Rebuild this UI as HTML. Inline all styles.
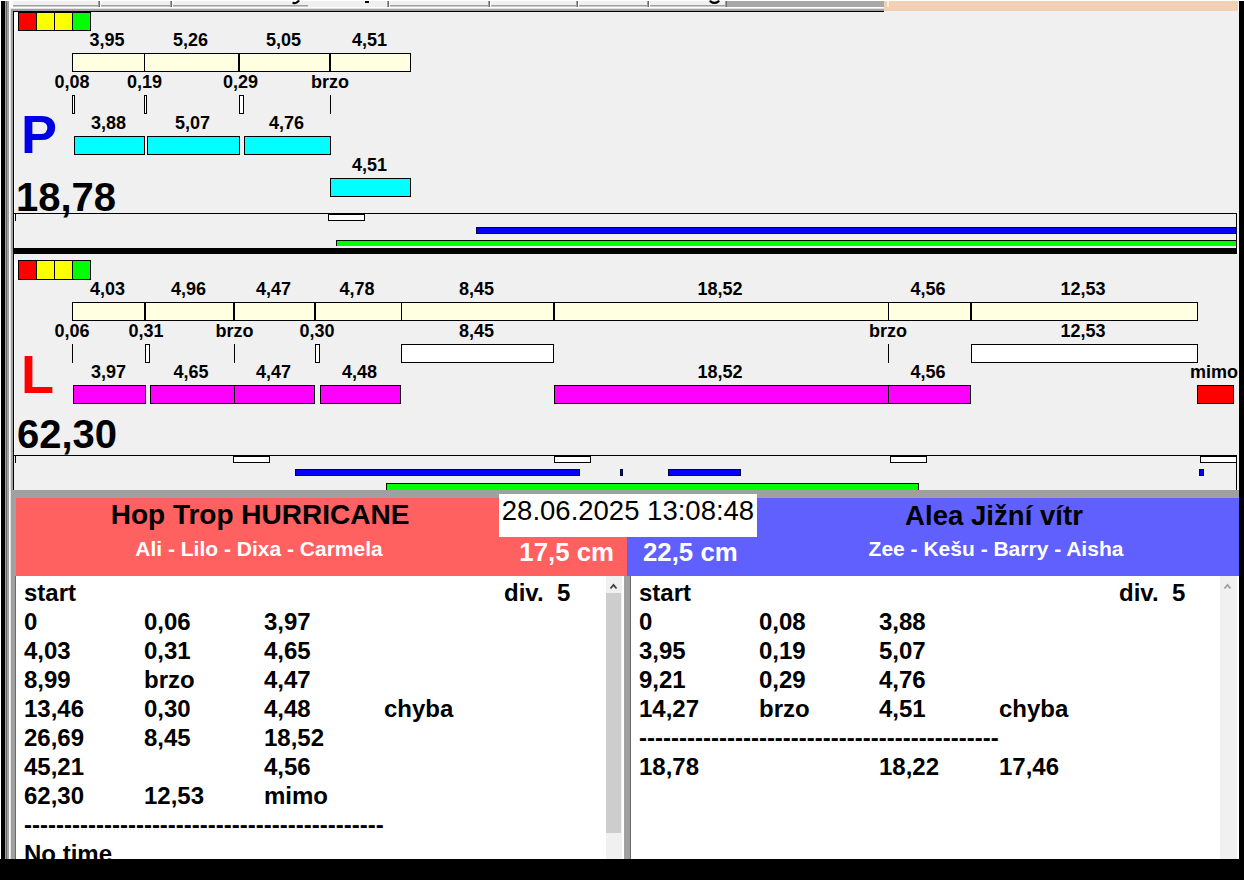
<!DOCTYPE html>
<html><head><meta charset="utf-8"><style>
html,body{margin:0;padding:0;width:1244px;height:880px;overflow:hidden;background:#fff}
div,svg{position:absolute}
.t{font-family:'Liberation Sans', sans-serif;line-height:1;white-space:nowrap}
</style></head><body>
<div style="left:0px;top:0px;width:1244px;height:880px;background:#ffffff;"></div>
<div style="left:1px;top:1px;width:4px;height:858px;background:#000;"></div>
<div style="left:5px;top:1px;width:1px;height:858px;background:#a0a0a0;"></div>
<div style="left:6px;top:1px;width:1px;height:858px;background:#696969;"></div>
<div style="left:7px;top:1px;width:2px;height:858px;background:#a0a0a0;"></div>
<div style="left:9px;top:7px;width:1px;height:852px;background:#ffffff;"></div>
<div style="left:10px;top:8px;width:1px;height:851px;background:#e3e3e3;"></div>
<div style="left:11px;top:9px;width:2px;height:850px;background:#a0a0a0;"></div>
<div style="left:13px;top:1px;width:712px;height:4px;background:#f0f0f0;"></div>
<div style="left:13px;top:5px;width:712px;height:1px;background:#a0a0a0;"></div>
<div style="left:13px;top:6px;width:712px;height:1px;background:#c8c8c8;"></div>
<div style="left:308px;top:1px;width:80px;height:6px;background:#f0f0f0;"></div>
<div style="left:726px;top:1px;width:158px;height:6px;background:#a8a8a8;"></div>
<div style="left:98px;top:1px;width:1px;height:6px;background:#a0a0a0;"></div>
<div style="left:99px;top:1px;width:1px;height:6px;background:#696969;"></div>
<div style="left:100px;top:1px;width:1px;height:6px;background:#ffffff;"></div>
<div style="left:170px;top:1px;width:1px;height:6px;background:#a0a0a0;"></div>
<div style="left:171px;top:1px;width:1px;height:6px;background:#696969;"></div>
<div style="left:172px;top:1px;width:1px;height:6px;background:#ffffff;"></div>
<div style="left:387px;top:1px;width:1px;height:6px;background:#a0a0a0;"></div>
<div style="left:388px;top:1px;width:1px;height:6px;background:#696969;"></div>
<div style="left:389px;top:1px;width:1px;height:6px;background:#ffffff;"></div>
<div style="left:488px;top:1px;width:1px;height:6px;background:#a0a0a0;"></div>
<div style="left:489px;top:1px;width:1px;height:6px;background:#696969;"></div>
<div style="left:490px;top:1px;width:1px;height:6px;background:#ffffff;"></div>
<div style="left:576px;top:1px;width:1px;height:6px;background:#a0a0a0;"></div>
<div style="left:577px;top:1px;width:1px;height:6px;background:#696969;"></div>
<div style="left:578px;top:1px;width:1px;height:6px;background:#ffffff;"></div>
<div style="left:647px;top:1px;width:1px;height:6px;background:#a0a0a0;"></div>
<div style="left:648px;top:1px;width:1px;height:6px;background:#696969;"></div>
<div style="left:649px;top:1px;width:1px;height:6px;background:#ffffff;"></div>
<div style="left:725px;top:1px;width:1px;height:6px;background:#a0a0a0;"></div>
<div style="left:726px;top:1px;width:1px;height:6px;background:#696969;"></div>
<div style="left:10px;top:8px;width:874px;height:1px;background:#e3e3e3;"></div>
<div style="left:11px;top:9px;width:873px;height:2px;background:#a0a0a0;"></div>
<svg style="left:290px;top:0px" width="12" height="6"><path d="M3.5 3 Q5 3.6 6.5 2.6 L8.5 1.2" stroke="#000" stroke-width="2.2" fill="none" stroke-linecap="round"/></svg>
<div style="left:365px;top:1px;width:4px;height:2px;background:#000;"></div>
<svg style="left:706px;top:0px" width="16" height="5"><path d="M4.5 1.3 Q8.5 4.6 12.5 1.3" stroke="#000" stroke-width="2.2" fill="none" stroke-linecap="round"/></svg>
<div style="left:884px;top:1px;width:354px;height:11px;background:#f2d0b4;"></div>
<div style="left:887px;top:1px;width:2px;height:6px;background:#faf0e6;"></div>
<div style="left:1239px;top:1px;width:5px;height:879px;background:#000;"></div>
<div style="left:0px;top:859px;width:1244px;height:21px;background:#000;"></div>
<div style="left:13px;top:11px;width:1226px;height:237px;background:#f0f0f0;"></div>
<div style="left:13px;top:11px;width:871px;height:1px;background:#000;"></div>
<div style="left:13px;top:11px;width:1px;height:237px;background:#000;"></div>
<div style="left:14px;top:12px;width:1px;height:236px;background:#fff;"></div>
<div style="left:14px;top:12px;width:4px;height:19px;background:#fff;"></div>
<div style="left:18px;top:11px;width:19px;height:20px;background:#ff0000;box-shadow:inset 0 0 0 1px #000;"></div>
<div style="left:36px;top:11px;width:19px;height:20px;background:#ffff00;box-shadow:inset 0 0 0 1px #000;"></div>
<div style="left:54px;top:11px;width:19px;height:20px;background:#ffff00;box-shadow:inset 0 0 0 1px #000;"></div>
<div style="left:72px;top:11px;width:19px;height:20px;background:#00ff00;box-shadow:inset 0 0 0 1px #000;"></div>
<div style="left:72px;top:53px;width:339px;height:19px;background:#ffffe1;box-shadow:inset 0 0 0 1px #000;"></div>
<div style="left:144px;top:53px;width:1px;height:19px;background:#000;"></div>
<div style="left:238px;top:53px;width:2px;height:19px;background:#000;"></div>
<div style="left:329px;top:53px;width:2px;height:19px;background:#000;"></div>
<div class="t" style="left:-193px;width:600px;text-align:center;top:31px;font-size:18px;font-weight:bold;color:#000;">3,95</div>
<div class="t" style="left:-109.5px;width:600px;text-align:center;top:31px;font-size:18px;font-weight:bold;color:#000;">5,26</div>
<div class="t" style="left:-16.5px;width:600px;text-align:center;top:31px;font-size:18px;font-weight:bold;color:#000;">5,05</div>
<div class="t" style="left:69.5px;width:600px;text-align:center;top:31px;font-size:18px;font-weight:bold;color:#000;">4,51</div>
<div class="t" style="left:-228px;width:600px;text-align:center;top:73px;font-size:18px;font-weight:bold;color:#000;">0,08</div>
<div class="t" style="left:-155.5px;width:600px;text-align:center;top:73px;font-size:18px;font-weight:bold;color:#000;">0,19</div>
<div class="t" style="left:-59.5px;width:600px;text-align:center;top:73px;font-size:18px;font-weight:bold;color:#000;">0,29</div>
<div class="t" style="left:30px;width:600px;text-align:center;top:73px;font-size:18px;font-weight:bold;color:#000;">brzo</div>
<div style="left:72px;top:95px;width:3px;height:19px;background:#fff;box-shadow:inset 0 0 0 1px #000;"></div>
<div style="left:144px;top:95px;width:3px;height:19px;background:#fff;box-shadow:inset 0 0 0 1px #000;"></div>
<div style="left:239px;top:95px;width:5px;height:19px;background:#fff;box-shadow:inset 0 0 0 1px #000;"></div>
<div style="left:330px;top:95px;width:1px;height:19px;background:#000;"></div>
<div style="left:74px;top:136px;width:71px;height:19px;background:#00ffff;box-shadow:inset 0 0 0 1px #000;"></div>
<div style="left:147px;top:136px;width:93px;height:19px;background:#00ffff;box-shadow:inset 0 0 0 1px #000;"></div>
<div style="left:244px;top:136px;width:87px;height:19px;background:#00ffff;box-shadow:inset 0 0 0 1px #000;"></div>
<div class="t" style="left:-191.5px;width:600px;text-align:center;top:114px;font-size:18px;font-weight:bold;color:#000;">3,88</div>
<div class="t" style="left:-107.5px;width:600px;text-align:center;top:114px;font-size:18px;font-weight:bold;color:#000;">5,07</div>
<div class="t" style="left:-13.5px;width:600px;text-align:center;top:114px;font-size:18px;font-weight:bold;color:#000;">4,76</div>
<div style="left:330px;top:178px;width:81px;height:19px;background:#00ffff;box-shadow:inset 0 0 0 1px #000;"></div>
<div class="t" style="left:69.5px;width:600px;text-align:center;top:156px;font-size:18px;font-weight:bold;color:#000;">4,51</div>
<div class="t" style="left:21px;top:107px;font-size:54px;font-weight:bold;color:#0000e6;">P</div>
<div class="t" style="left:16px;top:177px;font-size:40px;font-weight:bold;color:#000;">18,78</div>
<div style="left:13px;top:213px;width:1224px;height:1px;background:#000;"></div>
<div style="left:1236px;top:213px;width:1px;height:35px;background:#000;"></div>
<div style="left:15px;top:214px;width:1px;height:7px;background:#000;"></div>
<div style="left:328px;top:214px;width:37px;height:7px;background:#fff;box-shadow:inset 0 0 0 1px #000;"></div>
<div style="left:476px;top:227px;width:761px;height:7px;background:#0000ff;box-shadow:inset 0 0 0 1px #000040;"></div>
<div style="left:336px;top:240px;width:901px;height:6px;background:#00ff00;box-shadow:inset 1px 1px 0 #001000,inset -1px 0 0 #001000;"></div>
<div style="left:13px;top:248px;width:1224px;height:6px;background:#000;"></div>
<div style="left:13px;top:254px;width:1226px;height:236px;background:#f0f0f0;"></div>
<div style="left:14px;top:261px;width:4px;height:19px;background:#fff;"></div>
<div style="left:13px;top:254px;width:1px;height:236px;background:#000;"></div>
<div style="left:14px;top:254px;width:1px;height:201px;background:#fff;"></div>
<div style="left:18px;top:260px;width:19px;height:20px;background:#ff0000;box-shadow:inset 0 0 0 1px #000;"></div>
<div style="left:36px;top:260px;width:19px;height:20px;background:#ffff00;box-shadow:inset 0 0 0 1px #000;"></div>
<div style="left:54px;top:260px;width:19px;height:20px;background:#ffff00;box-shadow:inset 0 0 0 1px #000;"></div>
<div style="left:72px;top:260px;width:19px;height:20px;background:#00ff00;box-shadow:inset 0 0 0 1px #000;"></div>
<div style="left:72px;top:302px;width:1126px;height:19px;background:#ffffe1;box-shadow:inset 0 0 0 1px #000;"></div>
<div style="left:144px;top:302px;width:2px;height:19px;background:#000;"></div>
<div style="left:233px;top:302px;width:2px;height:19px;background:#000;"></div>
<div style="left:314px;top:302px;width:2px;height:19px;background:#000;"></div>
<div style="left:401px;top:302px;width:1px;height:19px;background:#000;"></div>
<div style="left:553px;top:302px;width:2px;height:19px;background:#000;"></div>
<div style="left:888px;top:302px;width:1px;height:19px;background:#000;"></div>
<div style="left:970px;top:302px;width:2px;height:19px;background:#000;"></div>
<div class="t" style="left:-192.5px;width:600px;text-align:center;top:280px;font-size:18px;font-weight:bold;color:#000;">4,03</div>
<div class="t" style="left:-111.5px;width:600px;text-align:center;top:280px;font-size:18px;font-weight:bold;color:#000;">4,96</div>
<div class="t" style="left:-26.5px;width:600px;text-align:center;top:280px;font-size:18px;font-weight:bold;color:#000;">4,47</div>
<div class="t" style="left:57px;width:600px;text-align:center;top:280px;font-size:18px;font-weight:bold;color:#000;">4,78</div>
<div class="t" style="left:176.5px;width:600px;text-align:center;top:280px;font-size:18px;font-weight:bold;color:#000;">8,45</div>
<div class="t" style="left:420px;width:600px;text-align:center;top:280px;font-size:18px;font-weight:bold;color:#000;">18,52</div>
<div class="t" style="left:628px;width:600px;text-align:center;top:280px;font-size:18px;font-weight:bold;color:#000;">4,56</div>
<div class="t" style="left:783px;width:600px;text-align:center;top:280px;font-size:18px;font-weight:bold;color:#000;">12,53</div>
<div class="t" style="left:-228px;width:600px;text-align:center;top:322px;font-size:18px;font-weight:bold;color:#000;">0,06</div>
<div class="t" style="left:-154px;width:600px;text-align:center;top:322px;font-size:18px;font-weight:bold;color:#000;">0,31</div>
<div class="t" style="left:-65.5px;width:600px;text-align:center;top:322px;font-size:18px;font-weight:bold;color:#000;">brzo</div>
<div class="t" style="left:17px;width:600px;text-align:center;top:322px;font-size:18px;font-weight:bold;color:#000;">0,30</div>
<div class="t" style="left:176.5px;width:600px;text-align:center;top:322px;font-size:18px;font-weight:bold;color:#000;">8,45</div>
<div class="t" style="left:588px;width:600px;text-align:center;top:322px;font-size:18px;font-weight:bold;color:#000;">brzo</div>
<div class="t" style="left:783px;width:600px;text-align:center;top:322px;font-size:18px;font-weight:bold;color:#000;">12,53</div>
<div style="left:72px;top:344px;width:1px;height:19px;background:#000;"></div>
<div style="left:145px;top:344px;width:5px;height:19px;background:#fff;box-shadow:inset 0 0 0 1px #000;"></div>
<div style="left:234px;top:344px;width:1px;height:19px;background:#000;"></div>
<div style="left:315px;top:344px;width:5px;height:19px;background:#fff;box-shadow:inset 0 0 0 1px #000;"></div>
<div style="left:401px;top:344px;width:153px;height:19px;background:#fff;box-shadow:inset 0 0 0 1px #000;"></div>
<div style="left:888px;top:344px;width:1px;height:19px;background:#000;"></div>
<div style="left:971px;top:344px;width:227px;height:19px;background:#fff;box-shadow:inset 0 0 0 1px #000;"></div>
<div style="left:73px;top:385px;width:73px;height:19px;background:#ff00ff;box-shadow:inset 0 0 0 1px #000;"></div>
<div style="left:150px;top:385px;width:85px;height:19px;background:#ff00ff;box-shadow:inset 0 0 0 1px #000;"></div>
<div style="left:234px;top:385px;width:81px;height:19px;background:#ff00ff;box-shadow:inset 0 0 0 1px #000;"></div>
<div style="left:320px;top:385px;width:81px;height:19px;background:#ff00ff;box-shadow:inset 0 0 0 1px #000;"></div>
<div style="left:554px;top:385px;width:335px;height:19px;background:#ff00ff;box-shadow:inset 0 0 0 1px #000;"></div>
<div style="left:888px;top:385px;width:83px;height:19px;background:#ff00ff;box-shadow:inset 0 0 0 1px #000;"></div>
<div class="t" style="left:-191.5px;width:600px;text-align:center;top:363px;font-size:18px;font-weight:bold;color:#000;">3,97</div>
<div class="t" style="left:-109px;width:600px;text-align:center;top:363px;font-size:18px;font-weight:bold;color:#000;">4,65</div>
<div class="t" style="left:-26.5px;width:600px;text-align:center;top:363px;font-size:18px;font-weight:bold;color:#000;">4,47</div>
<div class="t" style="left:59.5px;width:600px;text-align:center;top:363px;font-size:18px;font-weight:bold;color:#000;">4,48</div>
<div class="t" style="left:420px;width:600px;text-align:center;top:363px;font-size:18px;font-weight:bold;color:#000;">18,52</div>
<div class="t" style="left:628px;width:600px;text-align:center;top:363px;font-size:18px;font-weight:bold;color:#000;">4,56</div>
<div class="t" style="left:914px;width:600px;text-align:center;top:363px;font-size:18px;font-weight:bold;color:#000;">mimo</div>
<div class="t" style="left:21px;top:347px;font-size:54px;font-weight:bold;color:#ff0000;">L</div>
<div class="t" style="left:17px;top:414px;font-size:40px;font-weight:bold;color:#000;">62,30</div>
<div style="left:1197px;top:385px;width:37px;height:19px;background:#ff0000;box-shadow:inset 0 0 0 1px #000;"></div>
<div style="left:18px;top:12px;width:73px;height:1px;background:#000;"></div>
<div style="left:13px;top:455px;width:1224px;height:1px;background:#000;"></div>
<div style="left:1236px;top:455px;width:1px;height:35px;background:#000;"></div>
<div style="left:15px;top:456px;width:1px;height:7px;background:#000;"></div>
<div style="left:233px;top:456px;width:37px;height:7px;background:#fff;box-shadow:inset 0 0 0 1px #000;"></div>
<div style="left:554px;top:456px;width:37px;height:7px;background:#fff;box-shadow:inset 0 0 0 1px #000;"></div>
<div style="left:890px;top:456px;width:37px;height:7px;background:#fff;box-shadow:inset 0 0 0 1px #000;"></div>
<div style="left:1200px;top:456px;width:37px;height:7px;background:#fff;box-shadow:inset 0 0 0 1px #000;"></div>
<div style="left:295px;top:469px;width:285px;height:7px;background:#0000ff;box-shadow:inset 0 0 0 1px #000040;"></div>
<div style="left:620px;top:469px;width:3px;height:7px;background:#0000ff;box-shadow:inset 0 0 0 1px #000040;"></div>
<div style="left:668px;top:469px;width:73px;height:7px;background:#0000ff;box-shadow:inset 0 0 0 1px #000040;"></div>
<div style="left:1199px;top:469px;width:5px;height:7px;background:#0000ff;box-shadow:inset 0 0 0 1px #000040;"></div>
<div style="left:386px;top:483px;width:533px;height:7px;background:#00ff00;box-shadow:inset 1px 1px 0 #001000,inset -1px 0 0 #001000;"></div>
<div style="left:11px;top:490px;width:1228px;height:8px;background:#a0a0a0;"></div>
<div style="left:11px;top:490px;width:5px;height:369px;background:#a0a0a0;"></div>
<div style="left:16px;top:498px;width:611px;height:79px;background:#ff6060;"></div>
<div style="left:627px;top:498px;width:612px;height:79px;background:#6060ff;"></div>
<div style="left:499px;top:494px;width:258px;height:43px;background:#ffffff;"></div>
<div class="t" style="left:328px;width:600px;text-align:center;top:497px;font-size:27.5px;font-weight:normal;color:#000;">28.06.2025 13:08:48</div>
<div class="t" style="left:-40px;width:600px;text-align:center;top:501px;font-size:28px;font-weight:bold;color:#000;">Hop Trop HURRICANE</div>
<div class="t" style="left:-41px;width:600px;text-align:center;top:538px;font-size:21px;font-weight:bold;color:#fff;">Ali - Lilo - Dixa - Carmela</div>
<div class="t" style="left:14px;width:600px;text-align:right;top:540px;font-size:25.8px;font-weight:bold;color:#fff;">17,5 cm</div>
<div class="t" style="left:643px;top:540px;font-size:25.8px;font-weight:bold;color:#fff;">22,5 cm</div>
<div class="t" style="left:694px;width:600px;text-align:center;top:502px;font-size:27.6px;font-weight:bold;color:#000;">Alea Jižní vítr</div>
<div class="t" style="left:696px;width:600px;text-align:center;top:538px;font-size:21px;font-weight:bold;color:#fff;">Zee - Kešu - Barry - Aisha</div>
<div style="left:11px;top:576px;width:4px;height:283px;background:#a0a0a0;"></div>
<div style="left:15px;top:576px;width:1px;height:283px;background:#696969;"></div>
<div style="left:16px;top:576px;width:590px;height:283px;background:#fff;"></div>
<div style="left:606px;top:576px;width:16px;height:283px;background:#f0f0f0;"></div>
<div style="left:606px;top:593px;width:15px;height:240px;background:#cdcdcd;"></div>
<div style="left:622px;top:576px;width:2px;height:283px;background:#fff;"></div>
<div style="left:624px;top:576px;width:6px;height:283px;background:#a0a0a0;"></div>
<div style="left:630px;top:576px;width:1px;height:283px;background:#696969;"></div>
<div style="left:631px;top:576px;width:589px;height:283px;background:#fff;"></div>
<div style="left:1220px;top:576px;width:17px;height:283px;background:#f0f0f0;"></div>
<div style="left:1237px;top:576px;width:2px;height:283px;background:#fff;"></div>
<div class="t" style="left:24px;top:581px;font-size:24px;font-weight:bold;color:#000;">start</div>
<div class="t" style="left:24px;top:610px;font-size:24px;font-weight:bold;color:#000;">0</div>
<div class="t" style="left:144px;top:610px;font-size:24px;font-weight:bold;color:#000;">0,06</div>
<div class="t" style="left:264px;top:610px;font-size:24px;font-weight:bold;color:#000;">3,97</div>
<div class="t" style="left:24px;top:639px;font-size:24px;font-weight:bold;color:#000;">4,03</div>
<div class="t" style="left:144px;top:639px;font-size:24px;font-weight:bold;color:#000;">0,31</div>
<div class="t" style="left:264px;top:639px;font-size:24px;font-weight:bold;color:#000;">4,65</div>
<div class="t" style="left:24px;top:668px;font-size:24px;font-weight:bold;color:#000;">8,99</div>
<div class="t" style="left:144px;top:668px;font-size:24px;font-weight:bold;color:#000;">brzo</div>
<div class="t" style="left:264px;top:668px;font-size:24px;font-weight:bold;color:#000;">4,47</div>
<div class="t" style="left:24px;top:697px;font-size:24px;font-weight:bold;color:#000;">13,46</div>
<div class="t" style="left:144px;top:697px;font-size:24px;font-weight:bold;color:#000;">0,30</div>
<div class="t" style="left:264px;top:697px;font-size:24px;font-weight:bold;color:#000;">4,48</div>
<div class="t" style="left:384px;top:697px;font-size:24px;font-weight:bold;color:#000;">chyba</div>
<div class="t" style="left:24px;top:726px;font-size:24px;font-weight:bold;color:#000;">26,69</div>
<div class="t" style="left:144px;top:726px;font-size:24px;font-weight:bold;color:#000;">8,45</div>
<div class="t" style="left:264px;top:726px;font-size:24px;font-weight:bold;color:#000;">18,52</div>
<div class="t" style="left:24px;top:755px;font-size:24px;font-weight:bold;color:#000;">45,21</div>
<div class="t" style="left:264px;top:755px;font-size:24px;font-weight:bold;color:#000;">4,56</div>
<div class="t" style="left:24px;top:784px;font-size:24px;font-weight:bold;color:#000;">62,30</div>
<div class="t" style="left:144px;top:784px;font-size:24px;font-weight:bold;color:#000;">12,53</div>
<div class="t" style="left:264px;top:784px;font-size:24px;font-weight:bold;color:#000;">mimo</div>
<div class="t" style="left:24px;top:813px;font-size:24px;font-weight:bold;color:#000;">---------------------------------------------</div>
<div class="t" style="left:24px;top:842px;font-size:24px;font-weight:bold;color:#000;">No time</div>
<div class="t" style="left:504px;top:581px;font-size:24px;font-weight:bold;color:#000;">div.&nbsp;&nbsp;5</div>
<div class="t" style="left:639px;top:581px;font-size:24px;font-weight:bold;color:#000;">start</div>
<div class="t" style="left:639px;top:610px;font-size:24px;font-weight:bold;color:#000;">0</div>
<div class="t" style="left:759px;top:610px;font-size:24px;font-weight:bold;color:#000;">0,08</div>
<div class="t" style="left:879px;top:610px;font-size:24px;font-weight:bold;color:#000;">3,88</div>
<div class="t" style="left:639px;top:639px;font-size:24px;font-weight:bold;color:#000;">3,95</div>
<div class="t" style="left:759px;top:639px;font-size:24px;font-weight:bold;color:#000;">0,19</div>
<div class="t" style="left:879px;top:639px;font-size:24px;font-weight:bold;color:#000;">5,07</div>
<div class="t" style="left:639px;top:668px;font-size:24px;font-weight:bold;color:#000;">9,21</div>
<div class="t" style="left:759px;top:668px;font-size:24px;font-weight:bold;color:#000;">0,29</div>
<div class="t" style="left:879px;top:668px;font-size:24px;font-weight:bold;color:#000;">4,76</div>
<div class="t" style="left:639px;top:697px;font-size:24px;font-weight:bold;color:#000;">14,27</div>
<div class="t" style="left:759px;top:697px;font-size:24px;font-weight:bold;color:#000;">brzo</div>
<div class="t" style="left:879px;top:697px;font-size:24px;font-weight:bold;color:#000;">4,51</div>
<div class="t" style="left:999px;top:697px;font-size:24px;font-weight:bold;color:#000;">chyba</div>
<div class="t" style="left:639px;top:726px;font-size:24px;font-weight:bold;color:#000;">---------------------------------------------</div>
<div class="t" style="left:639px;top:755px;font-size:24px;font-weight:bold;color:#000;">18,78</div>
<div class="t" style="left:879px;top:755px;font-size:24px;font-weight:bold;color:#000;">18,22</div>
<div class="t" style="left:999px;top:755px;font-size:24px;font-weight:bold;color:#000;">17,46</div>
<div class="t" style="left:1119px;top:581px;font-size:24px;font-weight:bold;color:#000;">div.&nbsp;&nbsp;5</div>
<svg style="left:609px;top:582px" width="10" height="9"><path d="M1.5 6.5 L4.5 3 L7.5 6.5" stroke="#404040" stroke-width="1.8" fill="none"/></svg>
<svg style="left:1223px;top:582px" width="10" height="9"><path d="M1.5 6.5 L4.5 3 L7.5 6.5" stroke="#a0a0a0" stroke-width="1.8" fill="none"/></svg>
<div style="left:0px;top:859px;width:1244px;height:21px;background:#000;"></div>
<div style="left:1239px;top:1px;width:5px;height:879px;background:#000;"></div>
</body></html>
